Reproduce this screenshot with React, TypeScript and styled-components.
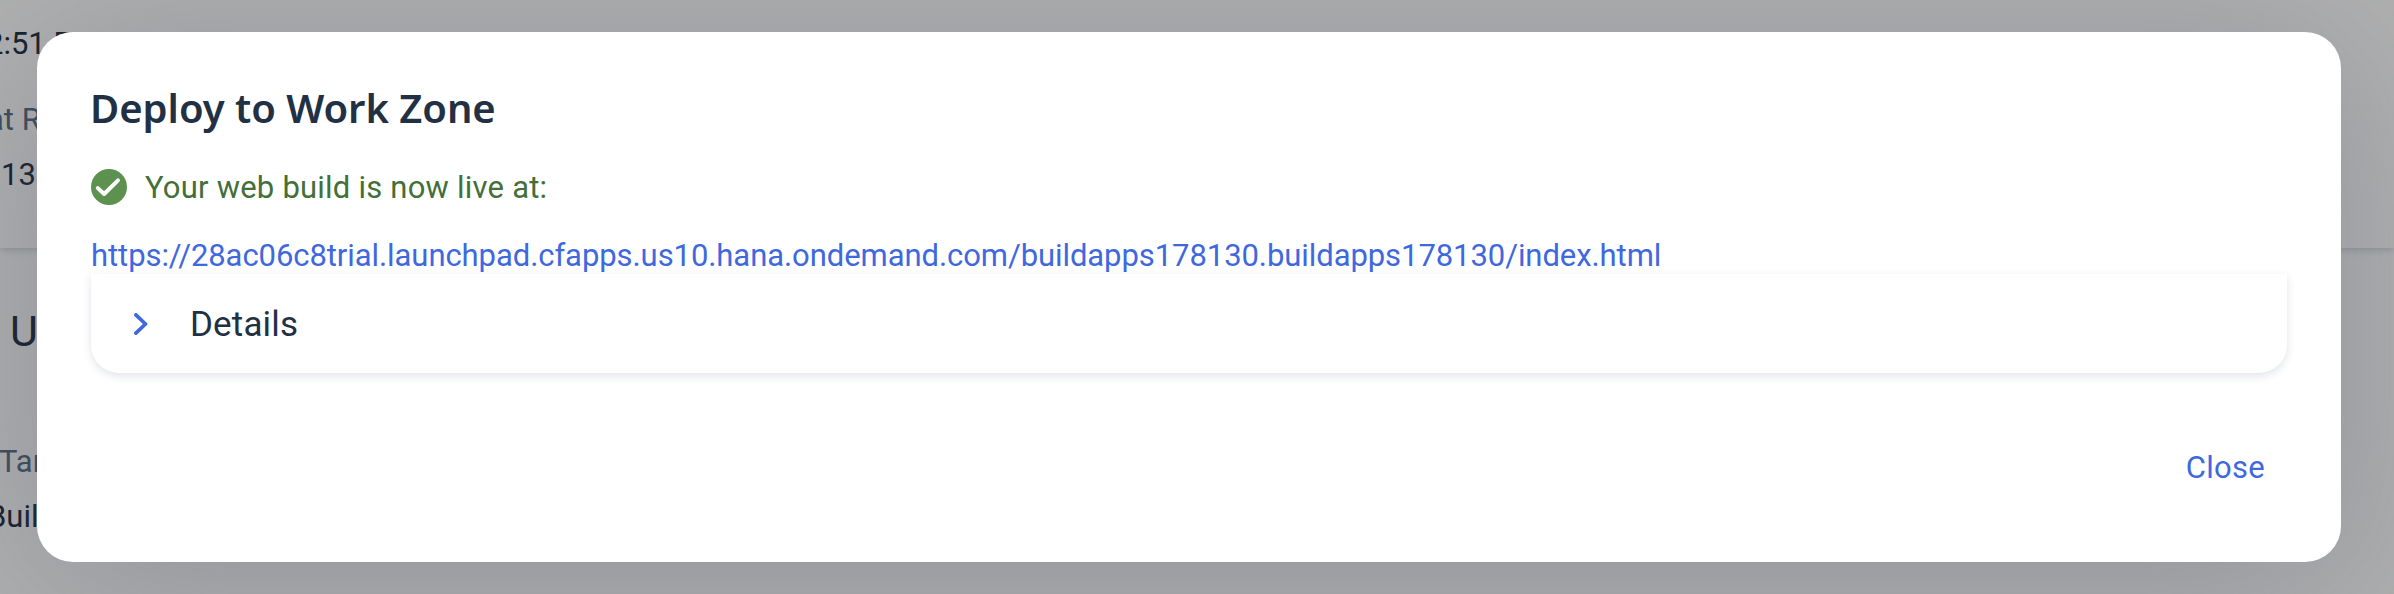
import React from "react";
import styled, { createGlobalStyle } from "styled-components";

const GlobalStyle = createGlobalStyle`
  *, *::before, *::after { box-sizing: border-box; }
  body { margin: 0; overflow: hidden; font-family: Roboto, "Noto Sans", sans-serif; }
`;

const Screen = styled.div`
  position: relative;
  width: 2394px;
  height: 594px;
  overflow: hidden;
  background: #fbfbfb;
`;

const PageHeader = styled.header`
  position: relative;
  height: 248px;
  background: #fdfdfd;
  box-shadow: 0 1px 8px rgba(34, 54, 100, 0.25);
`;

const PageBody = styled.section`
  height: 346px;
`;

const PageText = styled.div<{ $top: number; $shift?: number; $size?: number; $muted?: boolean }>`
  height: ${(p) => (p.$size ?? 31) + 5}px;
  margin-top: ${(p) => p.$top}px;
  margin-left: ${(p) => p.$shift ?? 0}px;
  font-size: ${(p) => p.$size ?? 31}px;
  line-height: ${(p) => (p.$size ?? 31) + 5}px;
  white-space: pre;
  color: ${(p) => (p.$muted ? "#5b6e86" : "#223044")};
`;

const Column = styled.div`
  display: flow-root;
  width: 100px;
`;

const Backdrop = styled.div`
  position: absolute;
  inset: 0;
  padding: 32px 53px 32px 37px;
  background: rgba(0, 0, 0, 0.3);
`;

const Dialog = styled.section`
  height: 530px;
  padding: 0 54px;
  border-radius: 36px;
  background: #fff;
  box-shadow: 0 20px 160px rgba(70, 84, 105, 0.3);
`;

const Title = styled.h1`
  margin: 0;
  padding-top: 50px;
  font: 600 40px/52px "Noto Sans", sans-serif;
  letter-spacing: -0.04px;
  text-indent: -1px;
  color: #223044;
`;

const Status = styled.div`
  display: flex;
  align-items: center;
  gap: 18px;
  height: 36px;
  margin-top: 35px;
  font-size: 31px;
  letter-spacing: 0.22px;
  color: #436f38;
`;

const Address = styled.a`
  display: block;
  height: 36px;
  margin-top: 33px;
  font-size: 31px;
  line-height: 36px;
  letter-spacing: -0.07px;
  white-space: nowrap;
  text-decoration: none;
  color: #3f68df;
`;

const Panel = styled.div`
  display: flex;
  align-items: center;
  height: 99px;
  padding-left: 43px;
  gap: 42px;
  border-radius: 0 0 28px 28px;
  background: #fff;
  box-shadow: 0 3px 8px rgba(34, 54, 100, 0.14);
  font-size: 35px;
  color: #223044;
`;

const PanelLabel = styled.span`
  padding-top: 2px;
  letter-spacing: 0.15px;
`;

const Footer = styled.footer`
  display: flex;
  justify-content: flex-end;
  padding: 77px 22px 0 0;
`;

const TextButton = styled.button`
  height: 36px;
  padding: 0;
  border: 0;
  background: none;
  font: 31px/36px Roboto, sans-serif;
  letter-spacing: 0.3px;
  color: #3f68df;
`;

export default function App() {
  return (
    <>
      <GlobalStyle />
      <Screen>
        <PageHeader>
          <Column>
            <PageText $top={26} $shift={-14}>2:51 P</PageText>
            <PageText $top={40} $shift={-13} $muted>at Run</PageText>
            <PageText $top={19} $shift={1}>13</PageText>
          </Column>
        </PageHeader>
        <PageBody>
          <Column>
            <PageText $top={59} $shift={10} $size={43}>U</PageText>
            <PageText $top={89} $shift={-1} $muted>Tar</PageText>
            <PageText $top={19} $shift={-13}>Build</PageText>
          </Column>
        </PageBody>
        <Backdrop>
          <Dialog role="dialog" aria-label="Deploy to Work Zone">
            <Title>Deploy to Work Zone</Title>
            <Status>
              <svg width="36" height="36" viewBox="0 0 36 36" aria-hidden="true">
                <circle cx="18" cy="18" r="18" fill="#5c914f" />
                <path d="M6.8 19.1 13.1 25 27 11.3" fill="none" stroke="#fff" strokeWidth="4" strokeLinecap="round" strokeLinejoin="round" />
              </svg>
              Your web build is now live at:
            </Status>
            <Address href="#">
              https://28ac06c8trial.launchpad.cfapps.us10.hana.ondemand.com/buildapps178130.buildapps178130/index.html
            </Address>
            <Panel>
              <svg width="14" height="22" viewBox="0 0 14 22" aria-hidden="true">
                <path d="M1.9 1.9 11.5 11 1.9 20.1" fill="none" stroke="#3f68df" strokeWidth="3.7" strokeLinecap="round" strokeLinejoin="round" />
              </svg>
              <PanelLabel>Details</PanelLabel>
            </Panel>
            <Footer>
              <TextButton type="button">Close</TextButton>
            </Footer>
          </Dialog>
        </Backdrop>
      </Screen>
    </>
  );
}
